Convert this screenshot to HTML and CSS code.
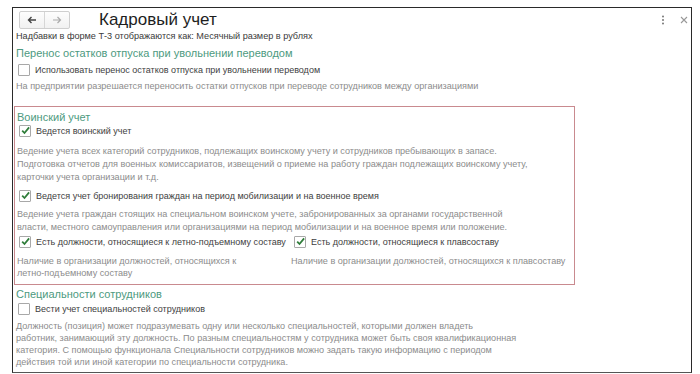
FILE: index.html
```html
<!DOCTYPE html>
<html lang="ru">
<head>
<meta charset="utf-8">
<link rel="stylesheet" href="styles.css">
</head>
<body>
<div class="page">
  <div class="frame">
    <div class="header">
      <div class="nav">
        <span class="navbtn back"><svg width="10" height="8" viewBox="0 0 10 8"><path d="M9 4H2M4.5 1L1.5 4l3 3" fill="none" stroke="#444" stroke-width="1.4"/></svg></span>
        <span class="navbtn fwd"><svg width="10" height="8" viewBox="0 0 10 8"><path d="M1 4h7M5.5 1l3 3-3 3" fill="none" stroke="#aaa" stroke-width="1.2"/></svg></span>
      </div>
      <div class="title">Кадровый учет</div>
      <div class="tools">
        <svg class="more" width="4" height="10" viewBox="0 0 4 10"><circle cx="2" cy="1.5" r="1" fill="#777"/><circle cx="2" cy="5" r="1" fill="#777"/><circle cx="2" cy="8.5" r="1" fill="#777"/></svg>
        <svg class="close" width="8" height="8" viewBox="0 0 8 8"><path d="M1 1l6 6M7 1L1 7" stroke="#999" stroke-width="1.1"/></svg>
      </div>
    </div>
    <div class="content">
      <div class="info">Надбавки в форме Т-3 отображаются как: Месячный размер в рублях</div>

      <div class="heading h-first">Перенос остатков отпуска при увольнении переводом</div>
      <label class="check c-first"><span class="box"></span>Использовать перенос остатков отпуска при увольнении переводом</label>
      <div class="desc d-first">На предприятии разрешается переносить остатки отпусков при переводе сотрудников между организациями</div>

      <div class="military">
        <div class="heading h-mil">Воинский учет</div>
        <label class="check"><span class="box on"><svg width="11" height="11" viewBox="0 0 11 11"><path d="M2.2 5.6l2.3 2.4 4.6-5.6" fill="none" stroke="#2f7d3a" stroke-width="1.8"/></svg></span>Ведется воинский учет</label>
        <div class="desc d-mil1">Ведение учета всех категорий сотрудников, подлежащих воинскому учету и сотрудников пребывающих в запасе.<br>Подготовка отчетов для военных комиссариатов, извещений о приеме на работу граждан подлежащих воинскому учету,<br>карточки учета организации и т.д.</div>
        <label class="check c-mil2"><span class="box on"><svg width="11" height="11" viewBox="0 0 11 11"><path d="M2.2 5.6l2.3 2.4 4.6-5.6" fill="none" stroke="#2f7d3a" stroke-width="1.8"/></svg></span>Ведется учет бронирования граждан на период мобилизации и на военное время</label>
        <div class="desc d-mil2">Ведение учета граждан стоящих на специальном воинском учете, забронированных за органами государственной<br>власти, местного самоуправления или организациями на период мобилизации и на военное время или положение.</div>
        <div class="pair">
          <div class="col">
            <label class="check"><span class="box on"><svg width="11" height="11" viewBox="0 0 11 11"><path d="M2.2 5.6l2.3 2.4 4.6-5.6" fill="none" stroke="#2f7d3a" stroke-width="1.8"/></svg></span>Есть должности, относящиеся к летно-подъемному составу</label>
            <div class="desc d-pair">Наличие в организации должностей, относящихся к<br>летно-подъемному составу</div>
          </div>
          <div class="col col-right">
            <label class="check"><span class="box on"><svg width="11" height="11" viewBox="0 0 11 11"><path d="M2.2 5.6l2.3 2.4 4.6-5.6" fill="none" stroke="#2f7d3a" stroke-width="1.8"/></svg></span>Есть должности, относящиеся к плавсоставу</label>
            <div class="desc d-pair d-right">Наличие в организации должностей, относящихся к плавсоставу</div>
          </div>
        </div>
      </div>

      <div class="heading h-spec">Специальности сотрудников</div>
      <label class="check c-spec"><span class="box"></span>Вести учет специальностей сотрудников</label>
      <div class="desc d-spec">Должность (позиция) может подразумевать одну или несколько специальностей, которыми должен владеть<br>работник, занимающий эту должность. По разным специальностям у сотрудника может быть своя квалификационная<br>категория. С помощью функционала Специальности сотрудников можно задать такую информацию с периодом<br>действия той или иной категории по специальности сотрудника.</div>
    </div>
  </div>
</div>
</body>
</html>
```

FILE: styles.css
```css
html, body {
  margin: 0;
  padding: 0;
  background: #fff;
}
body {
  font-family: "Liberation Sans", Arial, sans-serif;
  color: #3c3c3c;
}
.page {
  padding: 7px 8px 0 12px;
  height: 374px;
  box-sizing: border-box;
}
.frame {
  border: 1.5px solid #2a2a2a;
  border-bottom-color: #555;
  height: 366px;
  box-sizing: border-box;
  overflow: hidden;
}
.header {
  display: flex;
  align-items: flex-start;
  padding: 3px 3px 0 6px;
  height: 18.5px;
}
.nav {
  display: flex;
  border: 1px solid #cfcfcf;
  border-radius: 2px;
  background: linear-gradient(#fdfdfd, #f1f1f1);
  height: 16px;
}
.navbtn {
  width: 24px;
  display: flex;
  align-items: center;
  justify-content: center;
}
.navbtn.back {
  border-right: 1px solid #d6d6d6;
}
.title {
  margin-left: 29px;
  font-size: 17px;
  line-height: 17px;
  color: #1e1e1e;
}
.tools {
  margin-left: auto;
  display: flex;
  align-items: center;
  gap: 15px;
  padding-top: 4px;
}
.content {
  padding-left: 3px;
}
.info {
  font-size: 9.15px;
  line-height: 12px;
  color: #3a3a3a;
}
.heading {
  font-size: 11px;
  line-height: 14px;
  color: #4d9a80;
}
.h-first {
  margin-top: 4.5px;
}
.check {
  display: flex;
  align-items: center;
  font-size: 9px;
  line-height: 14px;
  color: #3e3e3e;
  margin-left: 2px;
}
.c-first {
  margin-top: 3px;
}
.box {
  width: 10px;
  height: 10px;
  border: 1px solid #a8a8a8;
  border-radius: 1px;
  background: #fff;
  margin-right: 5px;
  position: relative;
  flex: none;
}
.box svg {
  position: absolute;
  left: 0;
  top: -1px;
}
.desc {
  font-size: 9.1px;
  line-height: 13px;
  color: #8c8c8c;
}
.d-first {
  margin-top: 3px;
}
.military {
  margin: 13px 0 0 -2px;
  width: 561px;
  box-sizing: border-box;
  border: 1.5px solid #c98a8f;
  padding: 4px 0 5px 2px;
}
.h-mil {
  line-height: 13px;
}
.d-mil1 {
  margin-top: 7px;
}
.c-mil2 {
  margin-top: 5px;
}
.d-mil2 {
  margin-top: 5px;
}
.pair {
  display: grid;
  grid-template-columns: 274px 1fr;
  margin-top: 1px;
}
.d-pair {
  line-height: 12px;
  margin-top: 6px;
}
.col-right .check {
  margin-left: 3px;
}
.h-spec {
  margin-top: 2px;
}
.c-spec {
  margin-top: 1px;
}
.d-spec {
  line-height: 12px;
  margin-top: 4px;
}
```
